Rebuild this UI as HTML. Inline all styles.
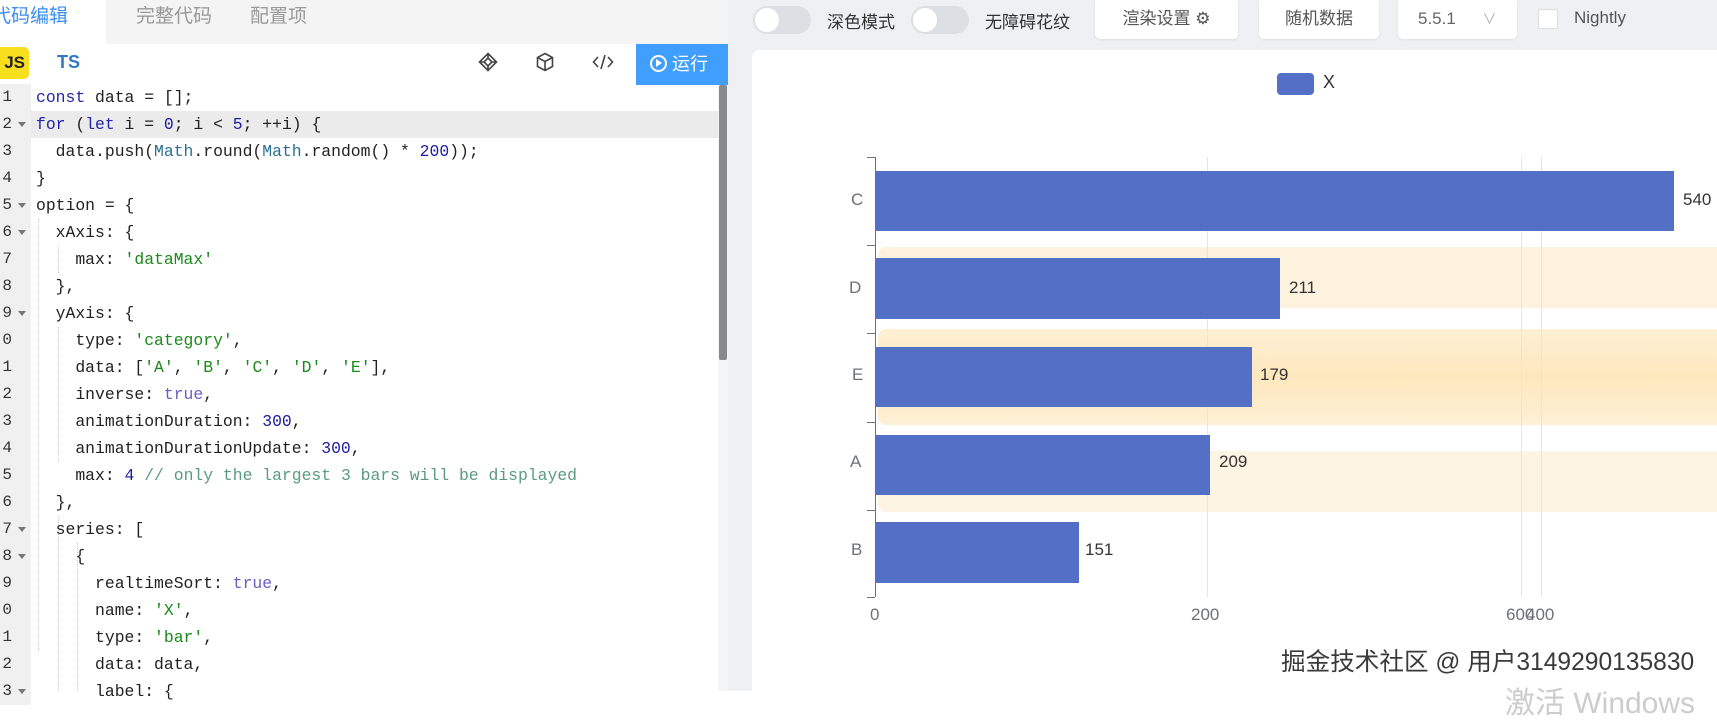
<!DOCTYPE html>
<html><head><meta charset="utf-8"><style>
*{margin:0;padding:0;box-sizing:border-box}
body{width:1717px;height:691px;overflow:hidden;background:#fff;font-family:"Liberation Sans","Noto Sans CJK SC",sans-serif;position:relative}
.abs{position:absolute}
#left{left:0;top:0;width:728px;height:691px;background:#fff}
.tabs{left:0;top:0;width:728px;height:44px;background:#f4f4f5}
.tab{position:absolute;top:0;height:44px;line-height:34px;font-size:19px;color:#999}
.code{font-family:"Liberation Mono",monospace;font-size:16.4px;color:#222;white-space:pre}
.ln{position:absolute;left:0;width:31px;height:27px;line-height:27px;background:#f0f0f0;color:#333;font-family:"Liberation Mono",monospace;font-size:16px}
.ln span{position:absolute;right:19px}
.ln i{position:absolute;left:18px;top:11px;border:4px solid transparent;border-top:5px solid #777}
.line{position:absolute;left:36px;height:27px;line-height:27px}
.k{color:#2525a8}.n{color:#1c1c9c}.s{color:#1a8a1a}.t{color:#6e5cc4}.c{color:#5b9a80}.m{color:#2a7090}
.guide{position:absolute;width:0;border-left:1px dotted #ccc}
#right{left:728px;top:0;width:989px;height:691px;background:#eef0f4}
.tg{position:absolute;top:6px;width:58px;height:28px;border-radius:14px;background:#dcdfe4}
.tg b{position:absolute;left:2px;top:2px;width:24px;height:24px;border-radius:12px;background:#fff}
.lbl{position:absolute;top:8px;font-size:17px;color:#333}
.btn{position:absolute;top:0;height:39px;background:#fff;border-radius:0 0 5px 5px;font-size:17px;color:#555;text-align:center;line-height:38px;box-shadow:0 1px 2px rgba(0,0,0,.08)}
.card{left:752px;top:50px;width:980px;height:660px;background:#fff;border-radius:8px}
.bar{position:absolute;left:876px;background:#5470c6}
.vl{position:absolute;font-size:17px;color:#333}
.yl{position:absolute;font-size:17px;color:#6e7079}
.xl{position:absolute;top:605px;font-size:17px;color:#6e7079}
.grid{position:absolute;top:157px;height:440px;width:1px;background:#e0e6f1}
.tick{position:absolute;left:867px;width:8px;height:1px;background:#6e7079}
</style></head><body>
<div id="left" class="abs">
 <div class="tabs abs">
  <div class="tab" style="left:0;width:106px;background:#fff;color:#3b8df0;padding-left:0"><span style="margin-left:-8px">代码编辑</span></div>
  <div class="tab" style="left:136px">完整代码</div>
  <div class="tab" style="left:250px">配置项</div>
 </div>
 <div class="abs" style="left:0;top:47px;width:29px;height:32px;background:#f7df1e;border-radius:0 5px 5px 0;font-weight:bold;font-size:17px;line-height:32px;color:#222;text-align:right;padding-right:4px">JS</div>
 <div class="abs" style="left:57px;top:52px;font-weight:bold;font-size:18px;color:#3178c6">TS</div>
 <svg class="abs" style="left:478px;top:52px" width="20" height="20" viewBox="0 0 20 20" fill="none" stroke="#444" stroke-width="1.6"><path d="M10 1.5 18.5 10 10 18.5 1.5 10Z M10 6 14 10 10 14 6 10Z M10 1.5V6 M18.5 10H14 M10 18.5V14 M1.5 10H6"/></svg>
 <svg class="abs" style="left:535px;top:52px" width="20" height="20" viewBox="0 0 20 20" fill="none" stroke="#444" stroke-width="1.6"><path d="M10 1.5 17.5 5.5V14.5L10 18.5 2.5 14.5V5.5Z M2.5 5.5 10 9.5 17.5 5.5 M10 9.5V18.5"/></svg>
 <svg class="abs" style="left:592px;top:53px" width="22" height="18" viewBox="0 0 22 18" fill="none" stroke="#444" stroke-width="1.6"><path d="M6 4 1.5 9 6 14 M16 4 20.5 9 16 14 M13 2 9 16"/></svg>
 <div class="abs" style="left:636px;top:44px;width:92px;height:41px;background:#409eff;color:#fff;font-size:18px;line-height:41px;padding-left:14px"><span style="display:inline-block;width:17px;height:17px;border:2px solid #fff;border-radius:50%;vertical-align:-2px;position:relative"><span style="position:absolute;left:4px;top:2px;border:4px solid transparent;border-left:6px solid #fff;border-right:0"></span></span> 运行</div>
 <div class="abs" style="left:31px;top:111px;width:687px;height:27px;background:#ebebeb"></div>
 <div class="abs" style="left:0;top:85px;width:31px;height:606px;background:#f0f0f0"></div>
 <div class="abs" style="left:718px;top:85px;width:10px;height:606px;background:#f5f5f5"></div>
 <div class="abs" style="left:719px;top:85px;width:8px;height:275px;background:#8a8a8a;border-radius:2px"></div>
 <div class="code">
 <div class="guide" style="left:38px;top:219px;height:432px"></div>
 <div class="guide" style="left:58px;top:246px;height:27px"></div>
 <div class="guide" style="left:58px;top:327px;height:135px"></div>
 <div class="guide" style="left:58px;top:516px;height:175px"></div>
 <div class="guide" style="left:77px;top:543px;height:148px"></div>
 </div>
 <div class="code" id="codewrap"></div>
</div>
<script>
var L=[
['1','','<span class="k">const</span> data = [];'],
['2','f','<span class="k">for</span> (<span class="k">let</span> i = <span class="n">0</span>; i &lt; <span class="n">5</span>; ++i) {'],
['3','','  data.push(<span class="m">Math</span>.round(<span class="m">Math</span>.random() * <span class="n">200</span>));'],
['4','','}'],
['5','f','option = {'],
['6','f','  xAxis: {'],
['7','','    max: <span class="s">\'dataMax\'</span>'],
['8','','  },'],
['9','f','  yAxis: {'],
['10','','    type: <span class="s">\'category\'</span>,'],
['11','','    data: [<span class="s">\'A\'</span>, <span class="s">\'B\'</span>, <span class="s">\'C\'</span>, <span class="s">\'D\'</span>, <span class="s">\'E\'</span>],'],
['12','','    inverse: <span class="t">true</span>,'],
['13','','    animationDuration: <span class="n">300</span>,'],
['14','','    animationDurationUpdate: <span class="n">300</span>,'],
['15','','    max: <span class="n">4</span> <span class="c">// only the largest 3 bars will be displayed</span>'],
['16','','  },'],
['17','f','  series: ['],
['18','f','    {'],
['19','','      realtimeSort: <span class="t">true</span>,'],
['20','','      name: <span class="s">\'X\'</span>,'],
['21','','      type: <span class="s">\'bar\'</span>,'],
['22','','      data: data,'],
['23','f','      label: {']];
var h='';
L.forEach(function(r,i){var y=84+i*27;
h+='<div class="ln" style="top:'+y+'px"><span>'+(r[0].length>1?r[0].slice(1):r[0])+'</span>'+(r[1]?'<i></i>':'')+'</div>';
h+='<div class="line" style="top:'+y+'px">'+r[2]+'</div>';});
document.getElementById('codewrap').innerHTML=h;
</script>
<div id="right" class="abs"></div>
<div class="tg" style="left:753px"><b></b></div>
<div class="lbl" style="left:827px">深色模式</div>
<div class="tg" style="left:911px"><b></b></div>
<div class="lbl" style="left:985px">无障碍花纹</div>
<div class="btn" style="left:1095px;width:143px">渲染设置 ⚙</div>
<div class="btn" style="left:1259px;width:120px">随机数据</div>
<div class="btn" style="left:1398px;width:119px;text-align:left;padding-left:20px;color:#666">5.5.1 <span style="margin-left:22px;color:#aaa;font-size:14px">∨</span></div>
<div class="abs" style="left:1538px;top:9px;width:20px;height:20px;background:#fff;border:1px solid #ddd;border-radius:2px"></div>
<div class="lbl" style="left:1574px;color:#555">Nightly</div>
<div class="card abs"></div>
<div class="abs" style="left:1277px;top:73px;width:37px;height:22px;background:#5470c6;border-radius:4px"></div>
<div class="abs" style="left:1323px;top:72px;font-size:18px;color:#333">X</div>
<div class="abs" style="left:878px;top:247px;width:839px;height:61px;background:#fdf2dd;border-radius:8px 0 0 8px"></div>
<div class="abs" style="left:878px;top:329px;width:839px;height:96px;background:linear-gradient(#fdf0d6,#fde7bd 50%,#fdf0d6);border-radius:8px 0 0 8px"></div>
<div class="abs" style="left:878px;top:451px;width:839px;height:61px;background:#fdf4e3;border-radius:8px 0 0 8px"></div>
<div class="grid" style="left:1207px"></div>
<div class="grid" style="left:1521px"></div>
<div class="grid" style="left:1541px"></div>
<div class="abs" style="left:875px;top:157px;width:1px;height:440px;background:#6e7079"></div>
<div class="tick" style="top:157px"></div><div class="tick" style="top:245px"></div><div class="tick" style="top:333px"></div><div class="tick" style="top:422px"></div><div class="tick" style="top:510px"></div><div class="tick" style="top:597px"></div>
<div class="bar" style="top:171px;width:798px;height:60px"></div>
<div class="bar" style="top:258px;width:404px;height:61px"></div>
<div class="bar" style="top:347px;width:376px;height:60px"></div>
<div class="bar" style="top:435px;width:334px;height:60px"></div>
<div class="bar" style="top:522px;width:203px;height:61px"></div>
<div class="vl" style="left:1683px;top:190px">540</div>
<div class="vl" style="left:1289px;top:278px">211</div>
<div class="vl" style="left:1260px;top:365px">179</div>
<div class="vl" style="left:1219px;top:452px">209</div>
<div class="vl" style="left:1085px;top:540px">151</div>
<div class="yl" style="left:851px;top:190px">C</div>
<div class="yl" style="left:849px;top:278px">D</div>
<div class="yl" style="left:852px;top:365px">E</div>
<div class="yl" style="left:850px;top:452px">A</div>
<div class="yl" style="left:851px;top:540px">B</div>
<div class="xl" style="left:870px">0</div>
<div class="xl" style="left:1191px">200</div>
<div class="xl" style="left:1506px">600</div>
<div class="xl" style="left:1526px">400</div>
<div class="abs" style="left:1281px;top:642px;font-size:24.6px;color:#3a3a3a;white-space:nowrap;text-shadow:0 0 2px #fff">掘金技术社区 @ 用户3149290135830</div>
<div class="abs" style="left:1505px;top:678px;font-size:30px;color:#ccc;white-space:nowrap">激活 Windows</div>
</body></html>
